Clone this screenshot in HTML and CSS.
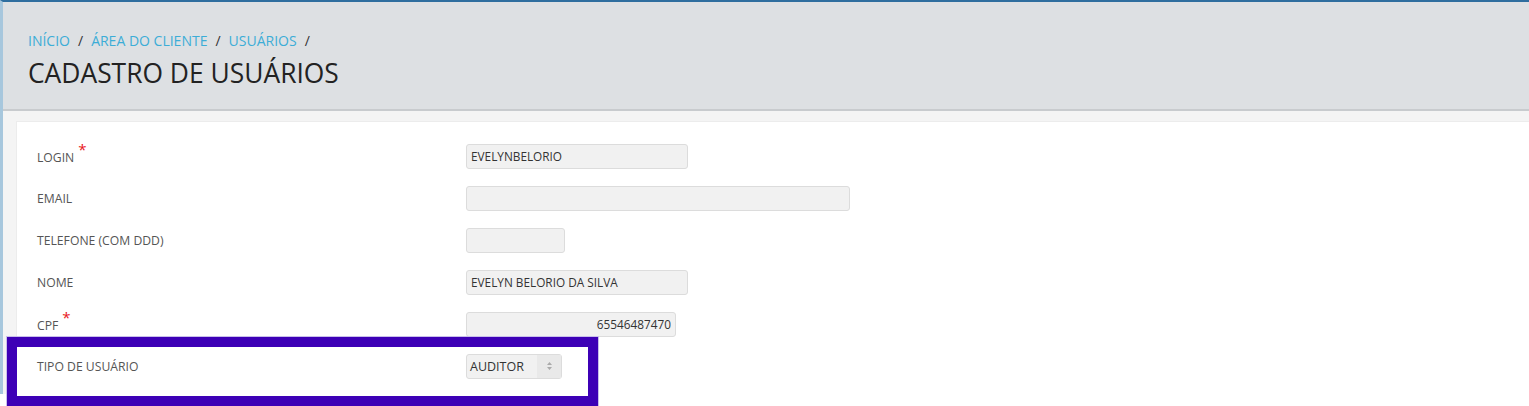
FILE: index.html
```html
<!DOCTYPE html>
<html lang="pt-BR">
<head>
    <meta charset="UTF-8">
    <meta name="viewport" content="width=device-width, initial-scale=1.0">
    <title>Cadastro de Usuários</title>
    <link rel="stylesheet" href="styles.css">
</head>
<body>

<div class="app">
    <div class="page-header">
        <ol class="breadcrumb">
            <li><a href="#">INÍCIO</a></li>
            <li><a href="#">ÁREA DO CLIENTE</a></li>
            <li><a href="#">USUÁRIOS</a></li>
        </ol>
        <h1>CADASTRO DE USUÁRIOS</h1>
    </div>

    <div class="content">
        <form class="panel">
            <div class="form-row">
                <label class="required">LOGIN</label>
                <input type="text" class="input w-md" value="EVELYNBELORIO">
            </div>
            <div class="form-row">
                <label>EMAIL</label>
                <input type="text" class="input w-lg" value="">
            </div>
            <div class="form-row">
                <label>TELEFONE (COM DDD)</label>
                <input type="text" class="input w-sm" value="">
            </div>
            <div class="form-row">
                <label>NOME</label>
                <input type="text" class="input w-md" value="EVELYN BELORIO DA SILVA">
            </div>
            <div class="form-row">
                <label class="required">CPF</label>
                <input type="text" class="input w-cpf num" value="65546487470">
            </div>
            <div class="form-row marked">
                <label>TIPO DE USUÁRIO</label>
                <div class="select">
                    <span class="select-value">AUDITOR</span>
                    <span class="select-arrow">
                        <svg width="7" height="10" viewBox="0 0 7 10"><path d="M3.5 1 L6 4 H1 Z M3.5 9 L6 6 H1 Z" fill="#aaa"/></svg>
                    </span>
                </div>
            </div>
        </form>
    </div>
</div>

<div class="highlight"></div>

</body>
</html>
```

FILE: styles.css
```css
body {
    margin: 0;
    font-family: "Open Sans", "Liberation Sans", sans-serif;
    background-color: #ffffff;
    color: #333;
}
.app {
    height: 392px;
    border-top: 2px solid #2f6e9f;
    border-left: 3px solid #a7c7dd;
    background-color: #f4f4f4;
    overflow: hidden;
}
.page-header {
    height: 109px;
    padding: 0 0 0 25px;
    background-color: #dde0e3;
    border-bottom: 2px solid #c8cbce;
    box-sizing: border-box;
}
.breadcrumb {
    list-style: none;
    margin: 0;
    padding: 29px 0 0 0;
    display: flex;
    font-size: 14px;
    line-height: 20px;
}
.breadcrumb li::after {
    content: "/";
    color: #333;
    margin: 0 8px 0 8px;
}
.breadcrumb a {
    color: #3cadd7;
    text-decoration: none;
}
.page-header h1 {
    margin: 4px 0 0 0;
    font-size: 26.4px;
    font-weight: 400;
    line-height: 36px;
    color: #222;
}
.content {
    padding: 10px 0 0 13px;
    height: 100%;
}
.panel {
    background-color: #fff;
    border-top: 1px solid #ececec;
    border-left: 1px solid #ececec;
    height: 100%;
    padding: 13px 0 0 20px;
    margin: 0;
}
.form-row {
    display: flex;
    align-items: center;
    height: 42px;
}
.form-row label {
    width: 429px;
    font-size: 12.2px;
    color: #555;
    flex-shrink: 0;
}
.form-row label.required::after {
    content: "*";
    color: #e8161b;
    font-size: 15px;
    position: relative;
    top: -7px;
    left: 4px;
}
.input {
    height: 25px;
    box-sizing: border-box;
    border: 1px solid #dcdcdc;
    border-radius: 3px;
    background-color: #f1f1f1;
    padding: 0 4px;
    font-family: inherit;
    font-size: 11.8px;
    color: #333;
}
.w-sm { width: 99px; }
.w-md { width: 222px; }
.w-lg { width: 384px; }
.w-cpf { width: 210px; }
.input.num {
    text-align: right;
}
.marked {
    position: relative;
    z-index: 2;
}
.select {
    display: flex;
    width: 96px;
    height: 25px;
    box-sizing: border-box;
    border: 1px solid #dcdcdc;
    border-radius: 3px;
    background-color: #f1f1f1;
    font-size: 12.5px;
    color: #333;
}
.select-value {
    flex: 1;
    padding-left: 3px;
    line-height: 23px;
}
.select-arrow {
    width: 24px;
    display: flex;
    align-items: center;
    justify-content: center;
    background-color: #e9e9e9;
}
.highlight {
    position: absolute;
    left: 7px;
    top: 337px;
    width: 591px;
    height: 69px;
    box-sizing: border-box;
    border: 10px solid #3d00b6;
    background-color: #fff;
    outline: 1px solid #c9bfeb;
    z-index: 1;
}
```
